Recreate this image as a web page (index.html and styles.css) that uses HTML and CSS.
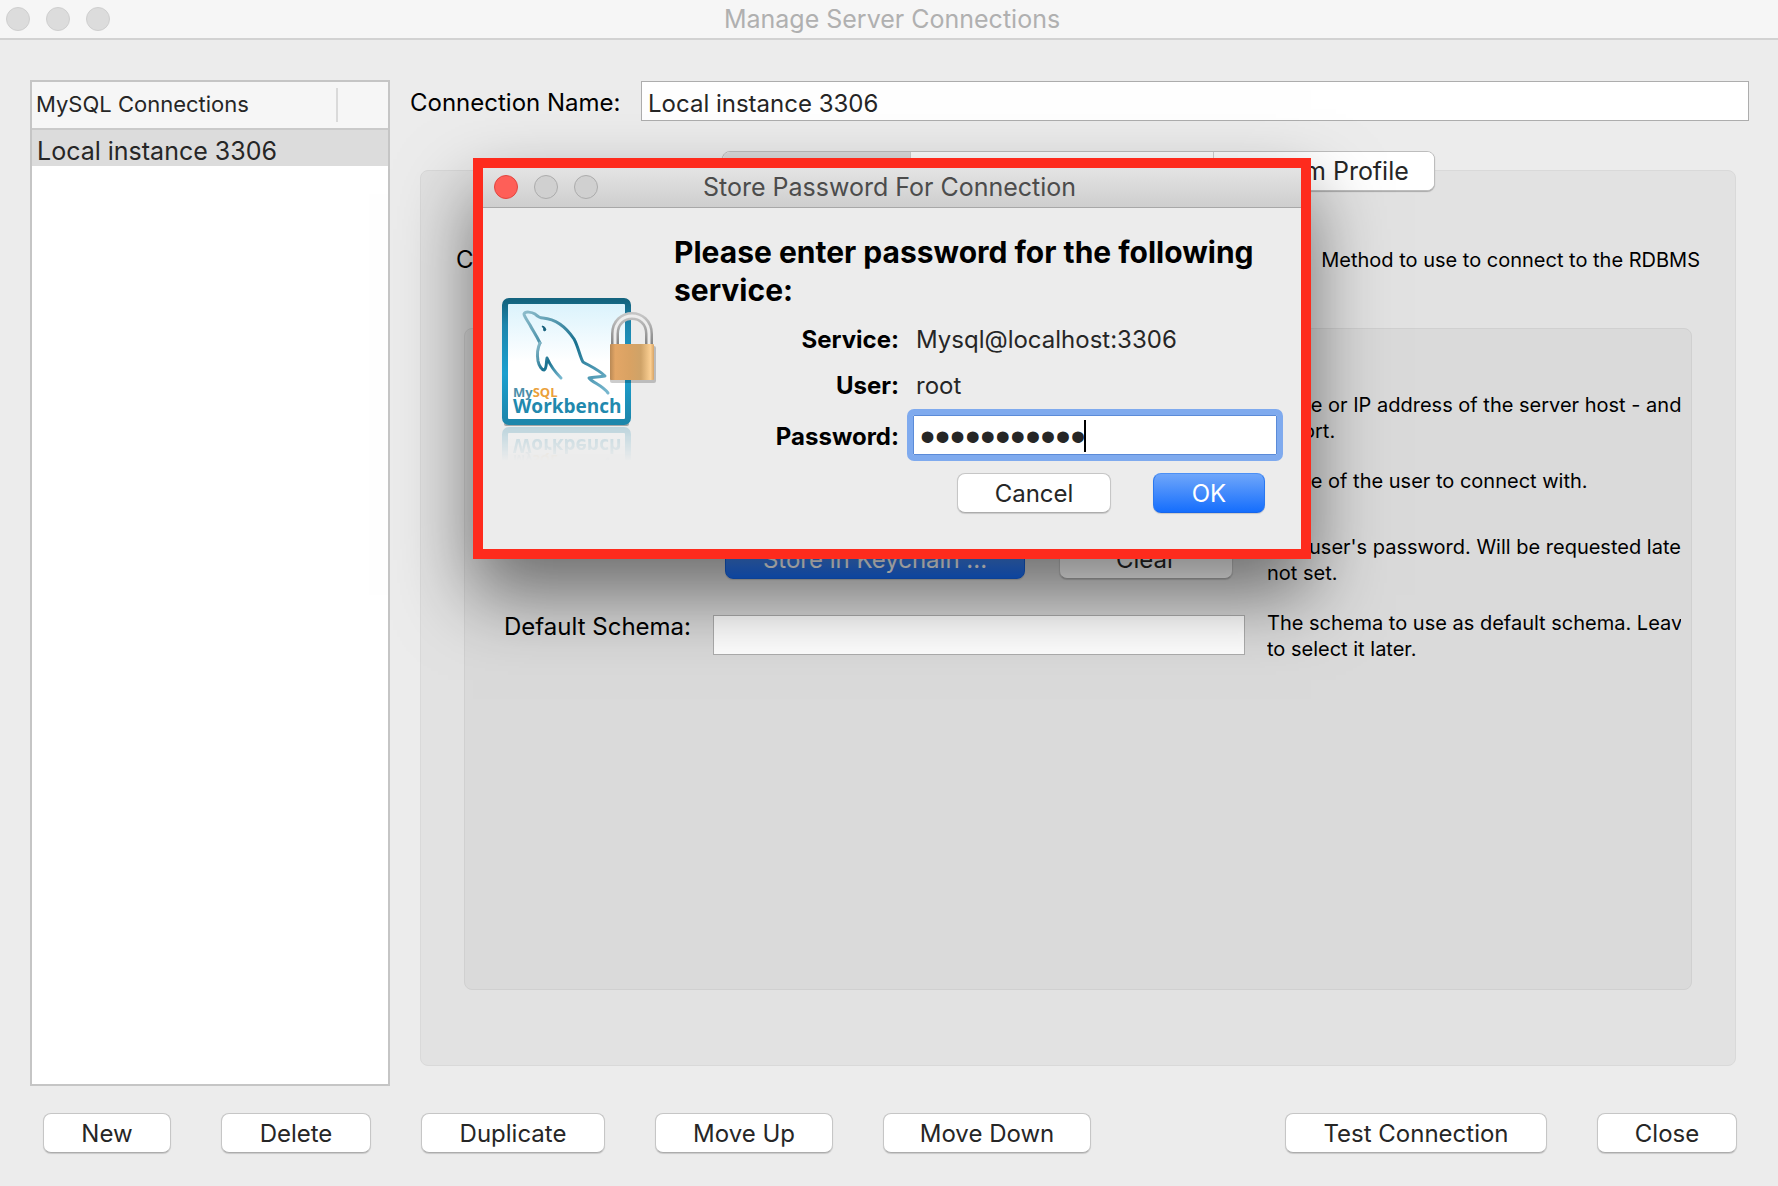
FILE: index.html
```html
<!DOCTYPE html>
<html lang="en">
  <head>
    <meta charset="UTF-8" />
    <meta name="viewport" content="width=device-width, initial-scale=1.0" />
    <title>Manage Server Connections</title>
    <link rel="stylesheet" href="styles.css">
  </head>
  <body>
    <div class="window">
      <header class="titlebar">
        <div class="lights"><span></span><span></span><span></span></div>
        <h1>Manage Server Connections</h1>
      </header>

      <main class="content">
        <aside class="list">
          <div class="list-header">MySQL Connections</div>
          <ul>
            <li class="selected">Local instance 3306</li>
          </ul>
        </aside>

        <section class="editor">
          <div class="name-row">
            <label for="conn-name">Connection Name:</label>
            <input type="text" id="conn-name" value="Local instance 3306" />
          </div>

          <div class="group">
            <div class="tabs">
              <button class="active" aria-label="Connection"></button>
              <button aria-label="Management"></button>
              <button>System Profile</button>
            </div>
            <div class="method-row">
              <span>Connection Method:</span>
              <p class="help">Method to use to connect to the RDBMS</p>
            </div>
            <div class="params">
              <p class="help">Name or IP address of the server host - and TCP/<br />IP port.</p>
              <p class="help">Name of the user to connect with.</p>
              <span class="label">Password:</span>
              <div class="keychain">
                <button class="btn primary">Store in Keychain ...</button>
                <button class="btn">Clear</button>
              </div>
              <p class="help">The user's password. Will be requested later if<br />not set.</p>
              <label class="label" for="schema">Default Schema:</label>
              <input type="text" id="schema" />
              <p class="help">The schema to use as default schema. Leave blank<br />to select it later.</p>
            </div>
          </div>
        </section>
      </main>

      <footer class="actions">
        <button class="btn">New</button>
        <button class="btn">Delete</button>
        <button class="btn">Duplicate</button>
        <button class="btn">Move Up</button>
        <button class="btn">Move Down</button>
        <button class="btn test">Test Connection</button>
        <button class="btn">Close</button>
      </footer>
    </div>

    <div class="dialog" role="dialog" aria-labelledby="dialog-title">
      <header class="titlebar">
        <div class="lights"><span class="close"></span><span></span><span></span></div>
        <h2 id="dialog-title">Store Password For Connection</h2>
      </header>
      <div class="dialog-body">
        <svg class="logo" width="162" height="168" viewBox="0 0 162 168">
          <defs>
            <linearGradient id="frame" x1="0" y1="0" x2="0" y2="1">
              <stop offset="0" stop-color="#14647f" />
              <stop offset="0.2" stop-color="#1d86ad" />
              <stop offset="0.6" stop-color="#1b9fcf" />
              <stop offset="1" stop-color="#1c86ab" />
            </linearGradient>
            <linearGradient id="sky" x1="0" y1="0" x2="0" y2="1">
              <stop offset="0" stop-color="#d9f2fc" />
              <stop offset="0.5" stop-color="#fff" />
            </linearGradient>
            <linearGradient id="skin" x1="0" y1="0" x2="1" y2="1">
              <stop offset="0" stop-color="#8dbccb" />
              <stop offset="0.5" stop-color="#17708f" />
              <stop offset="1" stop-color="#79b8cf" />
            </linearGradient>
            <linearGradient id="brass" x1="0" y1="0" x2="1" y2="0">
              <stop offset="0" stop-color="#b98955" />
              <stop offset="0.12" stop-color="#e3a666" />
              <stop offset="0.45" stop-color="#d9a263" />
              <stop offset="0.7" stop-color="#cfa368" />
              <stop offset="0.92" stop-color="#fbcf92" />
              <stop offset="1" stop-color="#d8a466" />
            </linearGradient>
            <linearGradient id="steel" x1="0" y1="0" x2="0" y2="1">
              <stop offset="0" stop-color="#c4c4c4" />
              <stop offset="1" stop-color="#7d7d7d" />
            </linearGradient>
            <linearGradient id="fade" x1="0" y1="0" x2="0" y2="1">
              <stop offset="0.72" stop-color="#fff" stop-opacity="0" />
              <stop offset="1" stop-color="#fff" stop-opacity="0.25" />
            </linearGradient>
            <mask id="fade-mask">
              <rect width="162" height="132" fill="url(#fade)" />
            </mask>
            <g id="badge">
              <rect x="6" y="5" width="123" height="121" rx="4" fill="url(#sky)" stroke="url(#frame)" stroke-width="6" />
              <g fill="none" stroke="url(#skin)" stroke-width="3" stroke-linejoin="round" stroke-linecap="round">
                <path d="M41 47 C36 37 34 35 31 29 C28 24 25 20 25 18 C26 15 33 16 36 18 C38 20 41 22 44 22 C56 23 67 31 75 43 C79 50 81 61 84 66 C91 70 100 74 106 80 C100 81 94 81 90 82 C94 87 103 89 109 97" />
                <path d="M41 47 C38 53 38 59 39 65 C40 70 43 74 45 74 C48 73 47 66 48 62 C52 71 56 76 62 82" />
              </g>
              <path d="M43 30 q3 0 4 4 l-2 1 q0 -3 -2 -5z" fill="#17607c" stroke="#17607c" />
              <text x="14" y="101" class="logo-small"><tspan fill="#4b8faa">My</tspan><tspan fill="#eba13b">SQL</tspan></text>
              <text x="14" y="117" class="logo-big">Workbench</text>
            </g>
          </defs>
          <rect x="5" y="126" width="125" height="4" rx="2" fill="#777" opacity="0.6" />
          <use href="#badge" />
          <g transform="translate(0 260) scale(1 -1)">
            <use href="#badge" mask="url(#fade-mask)" />
          </g>
          <g>
            <path d="M116 51 V38 C116 14 150 14 150 38 V51" fill="none" stroke="url(#steel)" stroke-width="8" />
            <path d="M116 51 V38 C116 14 150 14 150 38 V51" fill="none" stroke="#ededed" stroke-width="3" />
            <rect x="111" y="50" width="46" height="37" rx="2" fill="#000" opacity="0.2" />
            <rect x="111" y="48" width="44" height="36" rx="1" fill="url(#brass)" />
          </g>
        </svg>

        <form class="dialog-form" onsubmit="return false">
          <h3>Please enter password for the following service:</h3>
          <div class="fields">
            <b>Service:</b>
            <span class="value">Mysql@localhost:3306</span>
            <b>User:</b>
            <span class="value">root</span>
            <label for="password">Password:</label>
            <div class="password-box">
              <input type="password" id="password" value="abcdefghijk" />
              <span class="caret"></span>
            </div>
          </div>
          <div class="dialog-buttons">
            <button type="button" class="btn cancel">Cancel</button>
            <button type="submit" class="btn primary ok">OK</button>
          </div>
        </form>
      </div>
    </div>
  </body>
</html>
```
FILE: styles.css
```css
* {
  margin: 0;
  padding: 0;
  box-sizing: border-box;
}

body {
  position: relative;
  font-family: Inter, "Liberation Sans", sans-serif;
  font-size: 24px;
  line-height: 34px;
  color: #000;
  background: #ececec;
}

button,
input {
  font: inherit;
  color: #262626;
}

ul {
  list-style: none;
}

.window {
  display: flex;
  flex-direction: column;
  min-height: 100vh;
}

/* title bars */
.titlebar {
  display: grid;
  grid-template-columns: 1fr auto 1fr;
  align-items: center;
  height: 40px;
  padding-left: 6px;
  background: #f6f6f6;
  border-bottom: 2px solid #d2d2d2;
}

.titlebar h1,
.titlebar h2 {
  font-size: 25px;
  font-weight: 400;
  color: #b0b0b0;
}

.lights {
  display: flex;
  gap: 16px;
}

.lights span {
  width: 24px;
  height: 24px;
  border: 1px solid #cfcfcf;
  border-radius: 50%;
  background: #dcdcdc;
}

/* main area */
.content {
  flex: 1;
  display: flex;
  gap: 20px;
  padding: 40px 29px 27px 30px;
}

.list {
  width: 360px;
  background: #fff;
  border: 2px solid #c5c5c5;
}

.list-header {
  height: 48px;
  padding-left: 4px;
  font-size: 22px;
  line-height: 44px;
  color: #262626;
  background: linear-gradient(#dadada, #dadada) no-repeat right 50px top 6px / 2px 34px, #f6f6f6;
  border-bottom: 2px solid #cacaca;
}

.list li {
  height: 36px;
  padding-left: 5px;
  font-size: 25px;
  line-height: 42px;
  color: #262626;
}

.list .selected {
  background: #dcdcdc;
}

.editor {
  flex: 1;
  display: flex;
  flex-direction: column;
  padding-top: 1px;
}

.name-row {
  display: flex;
  align-items: center;
  justify-content: space-between;
}

.name-row label {
  width: 231px;
  padding-top: 4px;
}

input[type="text"] {
  flex: 1;
  height: 40px;
  padding: 4px 6px 0;
  background: #fff;
  border: 1px solid #adadad;
}

.group {
  flex: 1;
  display: flex;
  flex-direction: column;
  margin: 49px 13px 20px 10px;
  padding: 0 43px 75px;
  background: #e2e2e2;
  border: 1px solid #d9d9d9;
  border-radius: 8px;
}

.tabs {
  align-self: center;
  display: grid;
  grid-template-columns: 187px 303px 221px;
  height: 40px;
  margin-top: -20px;
  border: 1px solid #bdbdbd;
  border-radius: 8px;
  background: #fff;
  box-shadow: 0 1px 1px #aaa;
  overflow: hidden;
}

.tabs button {
  font-size: 25px;
  background: #fff;
  border: none;
  border-left: 1px solid #d0d0d0;
}

.tabs .active {
  background: #dcdcdc;
  border-left: none;
}

.method-row {
  display: flex;
  align-items: center;
  justify-content: space-between;
  height: 137px;
  margin: 0 -8px;
}

.help {
  font-size: 20px;
  line-height: 26px;
  white-space: nowrap;
  overflow: hidden;
}

.params {
  flex: 1;
  display: grid;
  grid-template-columns: 226px 532px minmax(0, 1fr);
  grid-template-rows: 76px 66px 76px auto;
  column-gap: 22px;
  align-items: start;
  padding: 63px 10px 0 0;
  background: #dadada;
  border: 1px solid #d0d0d0;
  border-radius: 8px;
}

.params .help {
  grid-column: 3;
}

.params .label {
  grid-column: 1;
  text-align: right;
}

.params input {
  margin-top: 5px;
}

.keychain {
  display: grid;
  grid-template-columns: 300px 174px;
  column-gap: 34px;
  padding: 5px 0 0 12px;
}

/* push buttons */
.btn {
  height: 40px;
  padding-top: 2px;
  background: #fff;
  border: 1px solid #c6c6c6;
  border-bottom-color: #acacac;
  border-radius: 8px;
  box-shadow: 0 1px 1px rgba(0, 0, 0, 0.15);
}

.btn.primary {
  color: #fff;
  background: linear-gradient(#6fa6fa, #156efd);
  border-color: #4c90f5 #2a78f0 #1766ea;
}

.keychain .primary {
  background: linear-gradient(#68a2fa, #1468f0);
  border-color: #1463e0;
}

.actions {
  display: grid;
  grid-template-columns: 128px 150px 184px 178px 208px 1fr 140px;
  column-gap: 50px;
  padding: 0 41px 33px 43px;
}

.actions .test {
  justify-self: end;
  width: 262px;
}

/* password dialog */
.dialog {
  position: absolute;
  top: 158px;
  left: 473px;
  width: 838px;
  background: #ececec;
  border: 10px solid #fe2b1d;
  box-shadow: 0 36px 70px rgba(0, 0, 0, 0.5);
}

.dialog .titlebar {
  padding: 0 16px 2px 11px;
  background: linear-gradient(#e4e4e4, #cecece);
  border-bottom: 1px solid #a8a8a8;
}

.dialog .titlebar h2 {
  color: #4c4c4c;
}

.dialog .lights span {
  background: #d0d0d0;
  border-color: #acacac;
}

.dialog .lights .close {
  background: #fe5f58;
  border-color: #e2453f;
}

.dialog-body {
  display: flex;
  gap: 13px;
  padding: 25px 18px 36px 16px;
}

.logo {
  flex: none;
  margin-top: 63px;
}

.logo-small {
  font: 700 13px "Open Sans", sans-serif;
}

.logo-big {
  font: 700 19px "Open Sans", sans-serif;
  fill: #2189ae;
}

.dialog-form {
  flex: 1;
}

.dialog-form h3 {
  font-size: 30px;
  font-weight: 700;
  line-height: 38px;
}

.fields {
  display: grid;
  grid-template-columns: 225px 1fr;
  grid-template-rows: 46px 46px 52px;
  column-gap: 8px;
  align-items: center;
  margin-top: 8px;
}

.fields b,
.fields label {
  font-weight: 700;
  text-align: right;
}

.fields label {
  padding-top: 3px;
}

.fields .value {
  padding-left: 9px;
  color: #262626;
}

.password-box {
  position: relative;
  padding: 6px;
}

.password-box input {
  display: block;
  width: 100%;
  height: 40px;
  padding: 3px 6px 0;
  font-family: "Liberation Sans", sans-serif;
  font-size: 43px;
  background: #fff;
  border: 1px solid #5b8bd8;
  outline: 6px solid #7faaee;
  border-radius: 1px;
}

.caret {
  position: absolute;
  top: 11px;
  left: 177px;
  width: 2px;
  height: 32px;
  background: #000;
}

.dialog-buttons {
  display: flex;
  justify-content: flex-end;
  gap: 42px;
  margin: 12px 18px 0 0;
}

.cancel {
  width: 154px;
}

.ok {
  width: 112px;
}
```
